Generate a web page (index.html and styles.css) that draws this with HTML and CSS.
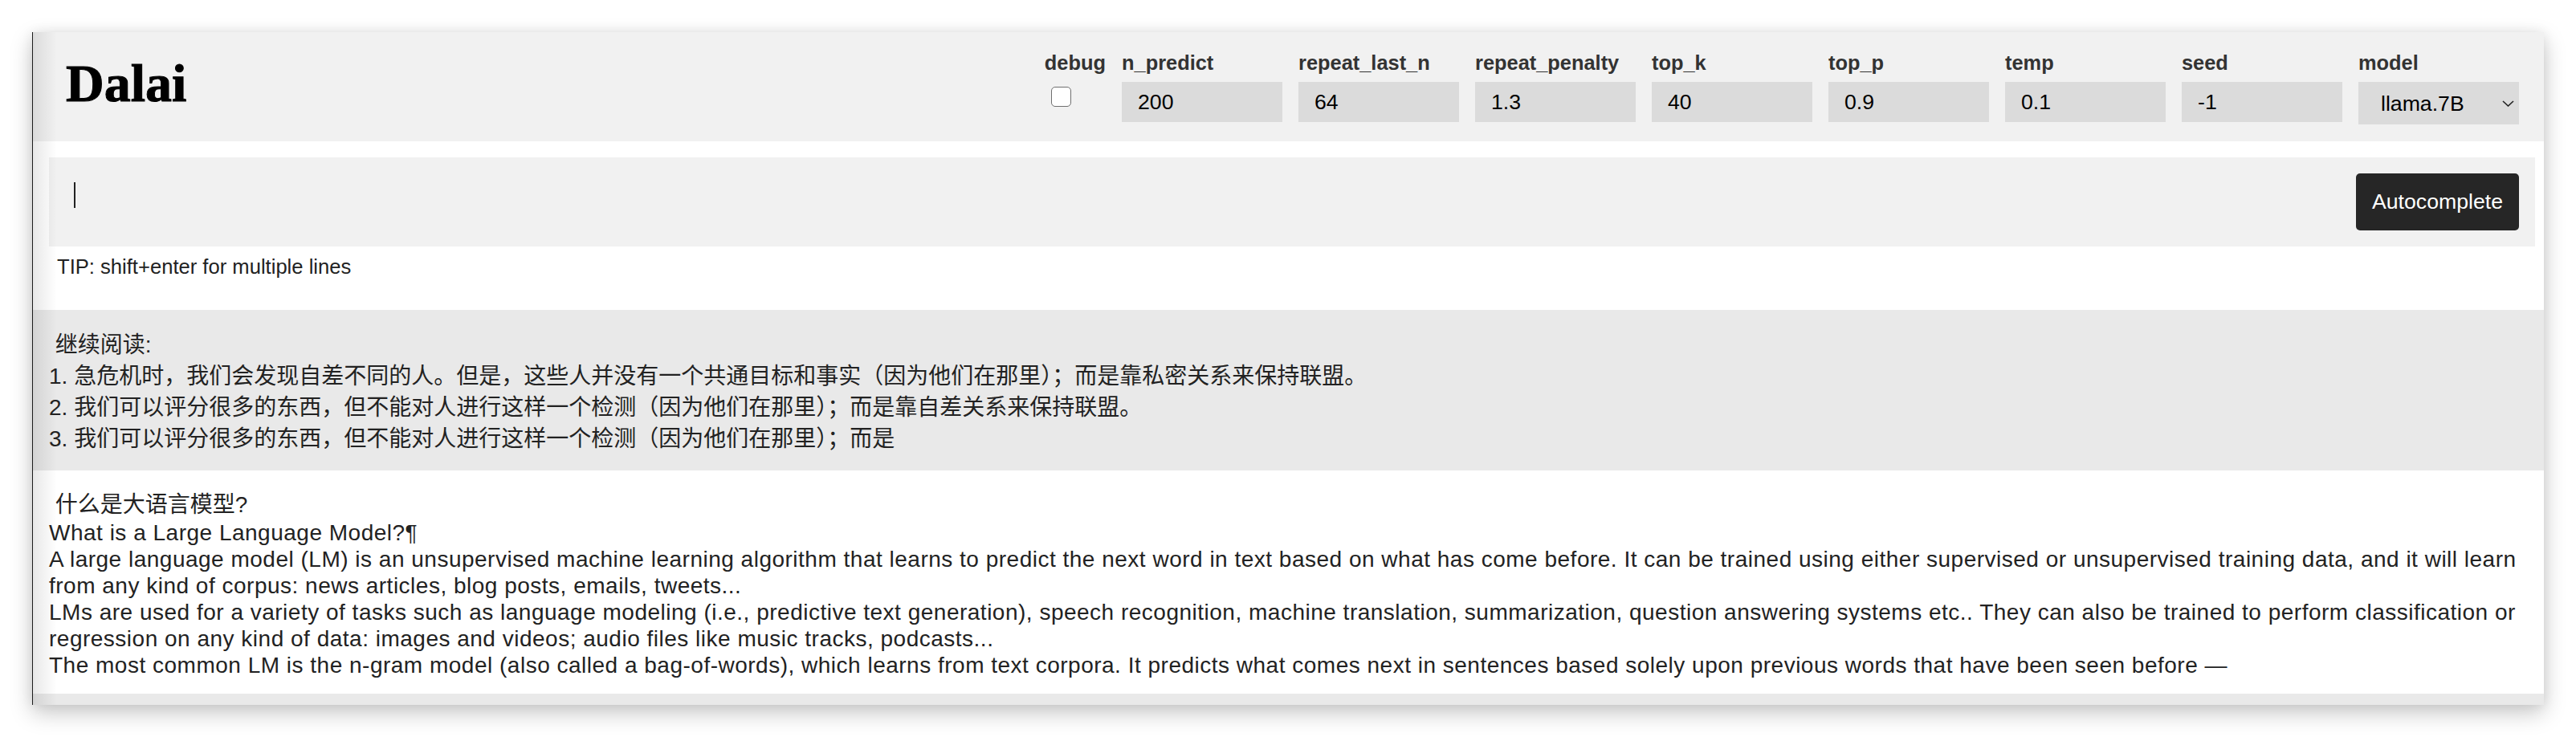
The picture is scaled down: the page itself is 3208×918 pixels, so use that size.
FILE: index.html
```html
<!DOCTYPE html>
<html lang="zh">
<head>
<meta charset="utf-8">
<title>Dalai</title>
<link rel="stylesheet" href="styles.css">
</head>
<body>
<div class="window">
  <header class="header">
    <h1 class="logo">Dalai</h1>
    <div class="config">
      <div class="field">
        <label class="field-label" for="debug">debug</label>
        <input class="checkbox" type="checkbox" id="debug">
      </div>
      <div class="field">
        <label class="field-label" for="n_predict">n_predict</label>
        <input class="num" type="text" id="n_predict" value="200">
      </div>
      <div class="field">
        <label class="field-label" for="repeat_last_n">repeat_last_n</label>
        <input class="num" type="text" id="repeat_last_n" value="64">
      </div>
      <div class="field">
        <label class="field-label" for="repeat_penalty">repeat_penalty</label>
        <input class="num" type="text" id="repeat_penalty" value="1.3">
      </div>
      <div class="field">
        <label class="field-label" for="top_k">top_k</label>
        <input class="num" type="text" id="top_k" value="40">
      </div>
      <div class="field">
        <label class="field-label" for="top_p">top_p</label>
        <input class="num" type="text" id="top_p" value="0.9">
      </div>
      <div class="field">
        <label class="field-label" for="temp">temp</label>
        <input class="num" type="text" id="temp" value="0.1">
      </div>
      <div class="field">
        <label class="field-label" for="seed">seed</label>
        <input class="num" type="text" id="seed" value="-1">
      </div>
      <div class="field">
        <label class="field-label" for="model">model</label>
        <div class="select-wrap">
          <select class="select" id="model"><option>llama.7B</option></select>
          <svg class="chevron" viewBox="0 0 15 8" aria-hidden="true"><path d="M1 1 L7.5 7 L14 1"/></svg>
        </div>
      </div>
    </div>
  </header>

  <div class="composer">
    <div class="prompt-box">
      <div class="prompt">
        <textarea class="prompt-input"></textarea>
        <span class="caret"></span>
      </div>
      <button class="submit">Autocomplete</button>
    </div>
    <div class="tip">TIP: shift+enter for multiple lines</div>
  </div>

  <div class="result result-alt"> 继续阅读:
1. 急危机时，我们会发现自差不同的人。但是，这些人并没有一个共通目标和事实（因为他们在那里）；而是靠私密关系来保持联盟。
2. 我们可以评分很多的东西，但不能对人进行这样一个检测（因为他们在那里）；而是靠自差关系来保持联盟。
3. 我们可以评分很多的东西，但不能对人进行这样一个检测（因为他们在那里）；而是</div>

  <div class="result result-plain"><span class="result-title"> 什么是大语言模型?</span>
What is a Large Language Model?¶
A large language model (LM) is an unsupervised machine learning algorithm that learns to predict the next word in text based on what has come before. It can be trained using either supervised or unsupervised training data, and it will learn from any kind of corpus: news articles, blog posts, emails, tweets...
LMs are used for a variety of tasks such as language modeling (i.e., predictive text generation), speech recognition, machine translation, summarization, question answering systems etc.. They can also be trained to perform classification or regression on any kind of data: images and videos; audio files like music tracks, podcasts...
The most common LM is the n-gram model (also called a bag-of-words), which learns from text corpora. It predicts what comes next in sentences based solely upon previous words that have been seen before —</div>

  <div class="result result-alt result-cut"></div>
</div>
</body>
</html>
```

FILE: styles.css
```css
* {
  box-sizing: border-box;
}

html,
body {
  margin: 0;
  background: #ffffff;
}

body {
  padding: 40px;
  font-family: "Liberation Sans", Arial, "Noto Sans CJK SC", sans-serif;
  color: #222222;
}

.window {
  position: relative;
  width: 3128px;
  height: 838px;
  overflow: hidden;
  background: #ffffff;
  border-left: 1px solid #1c1c1c;
  box-shadow: 0 10px 26px rgba(0, 0, 0, 0.22), 0 0 14px rgba(0, 0, 0, 0.07);
}

.window::after {
  content: "";
  position: absolute;
  left: 0;
  top: 0;
  bottom: 0;
  width: 30px;
  background: linear-gradient(to right, rgba(0, 0, 0, 0.09), rgba(0, 0, 0, 0));
  pointer-events: none;
}

/* header */
.header {
  display: flex;
  align-items: flex-start;
  height: 136px;
  padding: 24px 31px 0 41px;
  background: #f1f1f1;
}

.logo {
  margin: 7px 0 0;
  font-family: "Liberation Serif", "Times New Roman", serif;
  font-weight: 700;
  font-size: 66px;
  line-height: 66px;
  color: #000000;
  -webkit-text-stroke: 1px #000000;
}

.config {
  margin-left: auto;
  display: flex;
  gap: 20px;
}

.field {
  display: flex;
  flex-direction: column;
  align-items: flex-start;
}

.field-label {
  font-size: 25.4px;
  font-weight: 700;
  line-height: 29px;
  margin-bottom: 9px;
  color: #333333;
}

.num {
  width: 200px;
  height: 50px;
  border: 0;
  border-radius: 0;
  background: #dbdbdb;
  padding: 0 20px;
  font-family: inherit;
  font-size: 26.67px;
  color: #000000;
  outline: none;
}

.checkbox {
  appearance: none;
  -webkit-appearance: none;
  width: 25px;
  height: 25px;
  margin: 6px 6px 6px 8px;
  background: #ffffff;
  border: 1.5px solid #6f6f6f;
  border-radius: 5px;
}

.select-wrap {
  position: relative;
}

.select {
  appearance: none;
  -webkit-appearance: none;
  display: block;
  width: 200px;
  height: 53px;
  border: 0;
  border-radius: 0;
  background: #dbdbdb;
  padding: 0 40px 0 28px;
  font-family: inherit;
  font-size: 26.67px;
  color: #000000;
  outline: none;
}

.chevron {
  position: absolute;
  right: 6px;
  top: 23px;
  width: 15px;
  height: 8px;
  fill: none;
  stroke: #222222;
  stroke-width: 1.6;
  pointer-events: none;
}

/* composer */
.composer {
  padding: 20px 11px 39px 20px;
}

.prompt-box {
  display: flex;
  align-items: flex-start;
  padding: 20px;
  background: #f1f1f1;
}

.prompt {
  position: relative;
  flex: 1;
  height: 71px;
}

.prompt-input {
  display: block;
  width: 100%;
  height: 100%;
  border: 0;
  background: transparent;
  resize: none;
  outline: none;
  font-family: inherit;
  font-size: 28px;
}

.caret {
  position: absolute;
  left: 11px;
  top: 11px;
  width: 2px;
  height: 32px;
  background: #222222;
}

.submit {
  height: 71px;
  padding: 20px;
  border: 0;
  border-radius: 5px;
  background: #262626;
  color: #ffffff;
  font-family: inherit;
  font-size: 26.67px;
  line-height: 31px;
}

.tip {
  margin: 10px 0 0 10px;
  font-size: 25.6px;
  line-height: 30px;
  color: #222222;
}

/* results */
.result {
  white-space: pre-wrap;
  font-size: 28px;
  color: #222222;
}

.result-alt {
  background: #e9e9e9;
  padding: 24px 22px 20px 20px;
  line-height: 39px;
}

.result-plain {
  background: #ffffff;
  padding: 25px 12px 19px 20px;
  line-height: 33px;
  letter-spacing: 0.5px;
}

.result-title {
  line-height: 36px;
  letter-spacing: 0;
}

.result-cut {
  height: 40px;
  padding: 0;
}
```
